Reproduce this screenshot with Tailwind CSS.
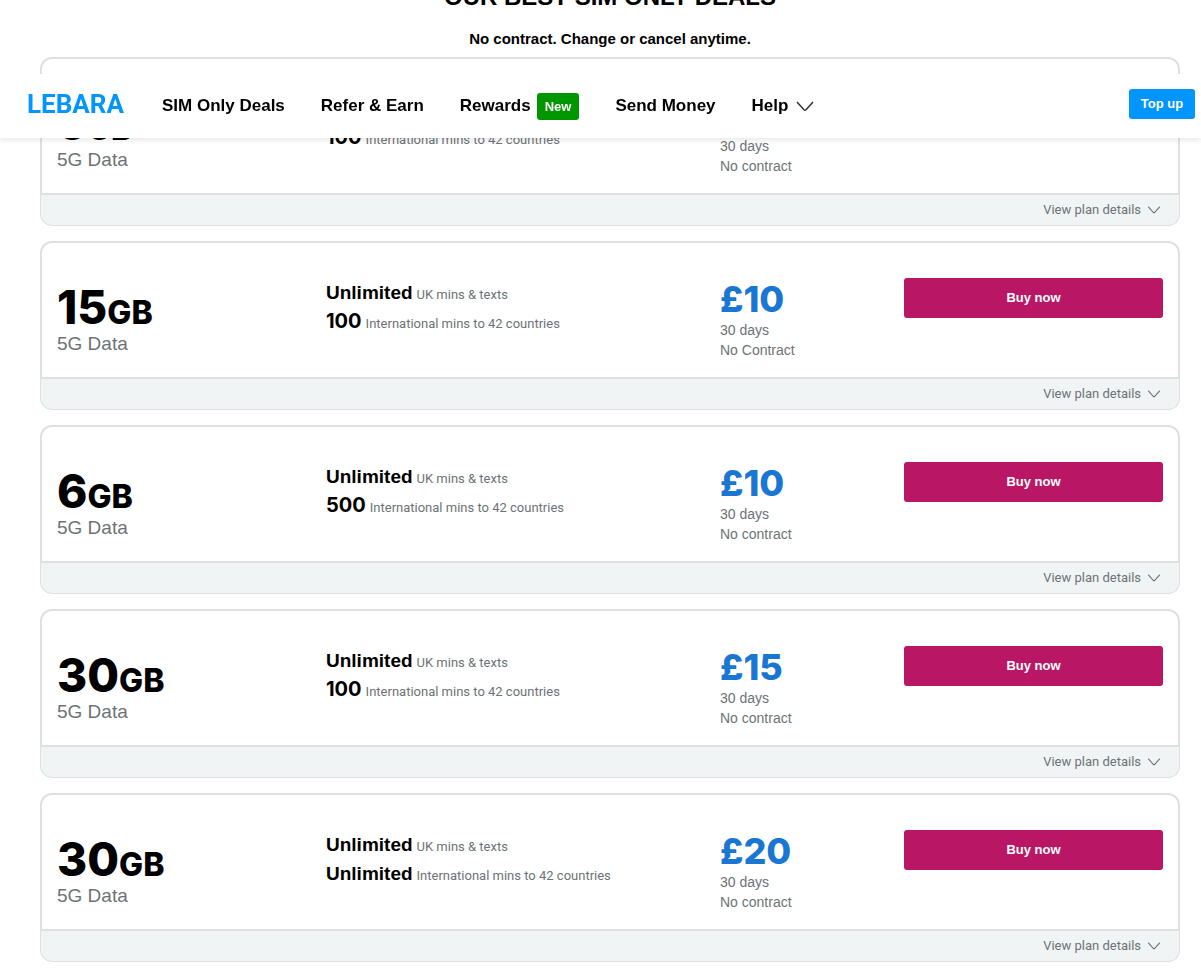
<!DOCTYPE html>
<html lang="en">
<head>
<meta charset="utf-8">
<meta name="viewport" content="width=device-width, initial-scale=1">
<title>Lebara SIM Only Deals</title>
<script src="https://cdn.jsdelivr.net/npm/@tailwindcss/browser@4"></script>
</head>
<body class="bg-white font-['Liberation_Sans',sans-serif] text-black overflow-hidden">
<svg class="hidden"><symbol id="chevron" viewBox="0 0 18 11"><path d="M1 1 L8 8.7 Q9 9.7 10 8.7 L17 1" fill="none" stroke="currentColor" stroke-width="1.5"/></symbol></svg>

<header class="fixed inset-x-0 top-[74px] z-10 flex h-16 items-center bg-white pl-[27px] pr-[6px] shadow-[0_3px_5px_rgba(0,0,0,0.08)]">
  <a href="#" class="w-[135px] pb-1 font-['Roboto',sans-serif] text-[26px] leading-8 font-bold text-[#0095ff]">LEBARA</a>
  <nav class="flex flex-1 items-center gap-9 whitespace-nowrap text-[17px] font-bold">
    <a href="#">SIM Only Deals</a>
    <a href="#">Refer &amp; Earn</a>
    <a href="#" class="flex items-center gap-[6px]">Rewards <span class="rounded-[3px] bg-[#009600] px-2 text-[13px] leading-[27px] text-white">New</span></a>
    <a href="#">Send Money</a>
    <button type="button" class="flex items-center gap-2">Help <svg class="h-[11px] w-[18px] text-[#333]"><use href="#chevron"/></svg></button>
  </nav>
  <button type="button" class="mb-1 h-[30px] w-[66px] rounded-[3px] bg-[#0095ff] text-[13px] font-bold text-white">Top up</button>
</header>

<main class="pl-10 pr-[21px]">
  <h1 class="-mt-[21px] text-center text-[24px] leading-9 font-bold">OUR BEST SIM ONLY DEALS</h1>
  <p class="mt-[13px] mb-2 text-center text-[15px] leading-[21px] font-bold">No contract. Change or cancel anytime.</p>
  <div id="plans" class="flex flex-col gap-[15px]"></div>
</main>

<template id="plan">
  <article>
    <div class="grid h-[138px] grid-cols-[269fr_394fr_184fr_259fr] rounded-t-xl border-2 border-[#e0e0e0] px-[15px] pt-[35px]">
      <div class="pt-2">
        <h2 class="font-['Inter',sans-serif] text-[32px] leading-[42px] font-extrabold"><span data-f="data" class="text-[46px]"></span>GB</h2>
        <p class="text-[19px] leading-5 text-[#6c7377]">5G Data</p>
      </div>
      <div class="font-['Roboto',sans-serif] text-[13px] leading-[29px] text-[#6c7377]">
        <p class="flex h-[29px] items-baseline gap-1"><strong class="font-['Liberation_Sans',sans-serif] text-[19px] text-black">Unlimited</strong> UK mins &amp; texts</p>
        <p class="flex h-[29px] items-baseline gap-1"><strong data-f="intl" class="text-black"></strong> International mins to 42 countries</p>
      </div>
      <div class="text-[14px] leading-5 text-[#6c7377]">
        <p data-f="price" class="font-['Inter',sans-serif] text-[36px] leading-[42px] font-extrabold text-[#1976d2]"></p>
        <p>30 days</p>
        <p data-f="term"></p>
      </div>
      <button type="button" class="h-10 rounded-[3px] bg-[#b91765] text-[13px] font-bold text-white">Buy now</button>
    </div>
    <div class="flex h-[31px] justify-end rounded-b-xl border border-t-0 border-[#e0e0e0] bg-[#f0f4f5] pr-[18px]">
      <button type="button" class="flex items-center gap-[6px] font-['Roboto',sans-serif] text-[13px] text-[#6c7377]">View plan details <svg class="h-2 w-[14px]"><use href="#chevron"/></svg></button>
    </div>
  </article>
</template>
<script>
const plans = [
  {data: '5', intl: '100', price: '£5', term: 'No contract'},
  {data: '15', intl: '100', price: '£10', term: 'No Contract'},
  {data: '6', intl: '500', price: '£10', term: 'No contract'},
  {data: '30', intl: '100', price: '£15', term: 'No contract'},
  {data: '30', intl: 'Unlimited', price: '£20', term: 'No contract'}
];
const list = document.getElementById('plans');
for (const plan of plans) {
  const card = document.getElementById('plan').content.cloneNode(true);
  card.querySelectorAll('[data-f]').forEach(el => { el.textContent = plan[el.dataset.f]; });
  const amount = card.querySelector('[data-f="intl"]');
  amount.className += plan.intl === 'Unlimited'
    ? " font-['Liberation_Sans',sans-serif] text-[19px]"
    : " font-['Inter',sans-serif] text-[20px]";
  list.append(card);
}
</script>
</body>
</html>
